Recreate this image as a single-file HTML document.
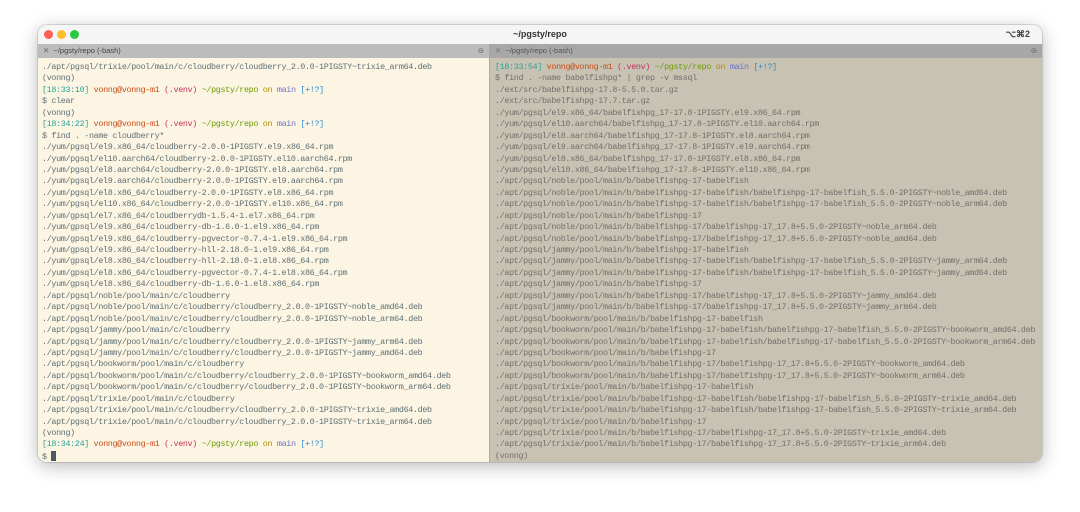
<!DOCTYPE html>
<html><head><meta charset="utf-8"><style>
body{margin:0;width:1080px;height:512px;background:#fff;position:relative;overflow:hidden;font-family:"Liberation Sans",sans-serif}
.win{position:absolute;left:38px;top:25px;width:1004px;height:437px;border-radius:9px;overflow:hidden;box-shadow:0 4px 18px rgba(0,0,0,.28),0 0 0 1px rgba(0,0,0,.12);background:#fcf5e3}
.title{position:absolute;left:0;top:0;width:100%;height:19px;background:#f5f5f5;text-align:center;font-size:9px;line-height:19px;color:#333;font-weight:bold}
.dot{position:absolute;top:5px;width:9px;height:9px;border-radius:50%}
.kbd{position:absolute;right:12px;top:0;font-size:9px;color:#444}
.tabs{position:absolute;top:19px;left:0;width:100%;height:14px}
.tab{position:absolute;top:0;height:14px;font-size:7.5px;line-height:14px;color:#444}
.pane{position:absolute;top:33px;bottom:0;font-family:"Liberation Mono",monospace;font-size:8.4px;letter-spacing:-0.33px;line-height:11.44px;white-space:pre;padding-top:4px}
.l{left:0;width:451px;background:#fcf5e3;color:#5f6f74;padding-left:4px}
.r{left:451px;right:0;background:#c8c2b3;color:#726f6a;padding-left:5px;border-left:1px solid #b0aa9c}
.t{color:#2aa198}.u{color:#cb4b16}.v{color:#c0305a}.p{color:#6e9a00}.o{color:#b58900}.m{color:#6c71c4}.b{color:#268bd2}
.cur{display:inline-block;width:5px;height:10px;background:#4a5a60;vertical-align:-2px}
</style></head><body>
<div class="win">
<div class="title">~/pgsty/repo<span class="dot" style="left:6px;background:#fe5f57"></span><span class="dot" style="left:19px;background:#febc2e"></span><span class="dot" style="left:32px;background:#28c840"></span><span class="kbd">⌥⌘2</span></div>
<div class="tabs">
<div class="tab" style="left:0;width:451px;background:#bcbcbc"><span style="margin-left:5px;color:#666">✕</span>&nbsp;&nbsp;~/pgsty/repo (-bash)<span style="position:absolute;right:5px;color:#666">⊖</span></div>
<div class="tab" style="left:451px;right:0;background:#a7a7a7;color:#555"><span style="margin-left:6px;color:#777">✕</span>&nbsp;&nbsp;~/pgsty/repo (-bash)<span style="position:absolute;right:5px;color:#666">⊖</span></div>
</div>
<div class="pane l">./apt/pgsql/trixie/pool/main/c/cloudberry/cloudberry_2.0.0-1PIGSTY~trixie_arm64.deb
(vonng)
<span class="t">[18:33:10]</span> <span class="u">vonng@vonng-m1</span> <span class="v">(.venv)</span> <span class="p">~/pgsty/repo</span> <span class="o">on</span> <span class="m">main</span> <span class="b">[+!?]</span>
$ clear
(vonng)
<span class="t">[18:34:22]</span> <span class="u">vonng@vonng-m1</span> <span class="v">(.venv)</span> <span class="p">~/pgsty/repo</span> <span class="o">on</span> <span class="m">main</span> <span class="b">[+!?]</span>
$ find . -name cloudberry*
./yum/pgsql/el9.x86_64/cloudberry-2.0.0-1PIGSTY.el9.x86_64.rpm
./yum/pgsql/el10.aarch64/cloudberry-2.0.0-1PIGSTY.el10.aarch64.rpm
./yum/pgsql/el8.aarch64/cloudberry-2.0.0-1PIGSTY.el8.aarch64.rpm
./yum/pgsql/el9.aarch64/cloudberry-2.0.0-1PIGSTY.el9.aarch64.rpm
./yum/pgsql/el8.x86_64/cloudberry-2.0.0-1PIGSTY.el8.x86_64.rpm
./yum/pgsql/el10.x86_64/cloudberry-2.0.0-1PIGSTY.el10.x86_64.rpm
./yum/gpsql/el7.x86_64/cloudberrydb-1.5.4-1.el7.x86_64.rpm
./yum/gpsql/el9.x86_64/cloudberry-db-1.6.0-1.el9.x86_64.rpm
./yum/gpsql/el9.x86_64/cloudberry-pgvector-0.7.4-1.el9.x86_64.rpm
./yum/gpsql/el9.x86_64/cloudberry-hll-2.18.0-1.el9.x86_64.rpm
./yum/gpsql/el8.x86_64/cloudberry-hll-2.18.0-1.el8.x86_64.rpm
./yum/gpsql/el8.x86_64/cloudberry-pgvector-0.7.4-1.el8.x86_64.rpm
./yum/gpsql/el8.x86_64/cloudberry-db-1.6.0-1.el8.x86_64.rpm
./apt/pgsql/noble/pool/main/c/cloudberry
./apt/pgsql/noble/pool/main/c/cloudberry/cloudberry_2.0.0-1PIGSTY~noble_amd64.deb
./apt/pgsql/noble/pool/main/c/cloudberry/cloudberry_2.0.0-1PIGSTY~noble_arm64.deb
./apt/pgsql/jammy/pool/main/c/cloudberry
./apt/pgsql/jammy/pool/main/c/cloudberry/cloudberry_2.0.0-1PIGSTY~jammy_arm64.deb
./apt/pgsql/jammy/pool/main/c/cloudberry/cloudberry_2.0.0-1PIGSTY~jammy_amd64.deb
./apt/pgsql/bookworm/pool/main/c/cloudberry
./apt/pgsql/bookworm/pool/main/c/cloudberry/cloudberry_2.0.0-1PIGSTY~bookworm_amd64.deb
./apt/pgsql/bookworm/pool/main/c/cloudberry/cloudberry_2.0.0-1PIGSTY~bookworm_arm64.deb
./apt/pgsql/trixie/pool/main/c/cloudberry
./apt/pgsql/trixie/pool/main/c/cloudberry/cloudberry_2.0.0-1PIGSTY~trixie_amd64.deb
./apt/pgsql/trixie/pool/main/c/cloudberry/cloudberry_2.0.0-1PIGSTY~trixie_arm64.deb
(vonng)
<span class="t">[18:34:24]</span> <span class="u">vonng@vonng-m1</span> <span class="v">(.venv)</span> <span class="p">~/pgsty/repo</span> <span class="o">on</span> <span class="m">main</span> <span class="b">[+!?]</span>
$ <span class="cur"></span></div>
<div class="pane r"><span class="t">[18:33:54]</span> <span class="u">vonng@vonng-m1</span> <span class="v">(.venv)</span> <span class="p">~/pgsty/repo</span> <span class="o">on</span> <span class="m">main</span> <span class="b">[+!?]</span>
$ find . -name babelfishpg* | grep -v mssql
./ext/src/babelfishpg-17.8-5.5.0.tar.gz
./ext/src/babelfishpg-17.7.tar.gz
./yum/pgsql/el9.x86_64/babelfishpg_17-17.8-1PIGSTY.el9.x86_64.rpm
./yum/pgsql/el10.aarch64/babelfishpg_17-17.8-1PIGSTY.el10.aarch64.rpm
./yum/pgsql/el8.aarch64/babelfishpg_17-17.8-1PIGSTY.el8.aarch64.rpm
./yum/pgsql/el9.aarch64/babelfishpg_17-17.8-1PIGSTY.el9.aarch64.rpm
./yum/pgsql/el8.x86_64/babelfishpg_17-17.8-1PIGSTY.el8.x86_64.rpm
./yum/pgsql/el10.x86_64/babelfishpg_17-17.8-1PIGSTY.el10.x86_64.rpm
./apt/pgsql/noble/pool/main/b/babelfishpg-17-babelfish
./apt/pgsql/noble/pool/main/b/babelfishpg-17-babelfish/babelfishpg-17-babelfish_5.5.0-2PIGSTY~noble_amd64.deb
./apt/pgsql/noble/pool/main/b/babelfishpg-17-babelfish/babelfishpg-17-babelfish_5.5.0-2PIGSTY~noble_arm64.deb
./apt/pgsql/noble/pool/main/b/babelfishpg-17
./apt/pgsql/noble/pool/main/b/babelfishpg-17/babelfishpg-17_17.8+5.5.0-2PIGSTY~noble_arm64.deb
./apt/pgsql/noble/pool/main/b/babelfishpg-17/babelfishpg-17_17.8+5.5.0-2PIGSTY~noble_amd64.deb
./apt/pgsql/jammy/pool/main/b/babelfishpg-17-babelfish
./apt/pgsql/jammy/pool/main/b/babelfishpg-17-babelfish/babelfishpg-17-babelfish_5.5.0-2PIGSTY~jammy_arm64.deb
./apt/pgsql/jammy/pool/main/b/babelfishpg-17-babelfish/babelfishpg-17-babelfish_5.5.0-2PIGSTY~jammy_amd64.deb
./apt/pgsql/jammy/pool/main/b/babelfishpg-17
./apt/pgsql/jammy/pool/main/b/babelfishpg-17/babelfishpg-17_17.8+5.5.0-2PIGSTY~jammy_amd64.deb
./apt/pgsql/jammy/pool/main/b/babelfishpg-17/babelfishpg-17_17.8+5.5.0-2PIGSTY~jammy_arm64.deb
./apt/pgsql/bookworm/pool/main/b/babelfishpg-17-babelfish
./apt/pgsql/bookworm/pool/main/b/babelfishpg-17-babelfish/babelfishpg-17-babelfish_5.5.0-2PIGSTY~bookworm_amd64.deb
./apt/pgsql/bookworm/pool/main/b/babelfishpg-17-babelfish/babelfishpg-17-babelfish_5.5.0-2PIGSTY~bookworm_arm64.deb
./apt/pgsql/bookworm/pool/main/b/babelfishpg-17
./apt/pgsql/bookworm/pool/main/b/babelfishpg-17/babelfishpg-17_17.8+5.5.0-2PIGSTY~bookworm_amd64.deb
./apt/pgsql/bookworm/pool/main/b/babelfishpg-17/babelfishpg-17_17.8+5.5.0-2PIGSTY~bookworm_arm64.deb
./apt/pgsql/trixie/pool/main/b/babelfishpg-17-babelfish
./apt/pgsql/trixie/pool/main/b/babelfishpg-17-babelfish/babelfishpg-17-babelfish_5.5.0-2PIGSTY~trixie_amd64.deb
./apt/pgsql/trixie/pool/main/b/babelfishpg-17-babelfish/babelfishpg-17-babelfish_5.5.0-2PIGSTY~trixie_arm64.deb
./apt/pgsql/trixie/pool/main/b/babelfishpg-17
./apt/pgsql/trixie/pool/main/b/babelfishpg-17/babelfishpg-17_17.8+5.5.0-2PIGSTY~trixie_amd64.deb
./apt/pgsql/trixie/pool/main/b/babelfishpg-17/babelfishpg-17_17.8+5.5.0-2PIGSTY~trixie_arm64.deb
(vonng)</div>
</div>
</body></html>
